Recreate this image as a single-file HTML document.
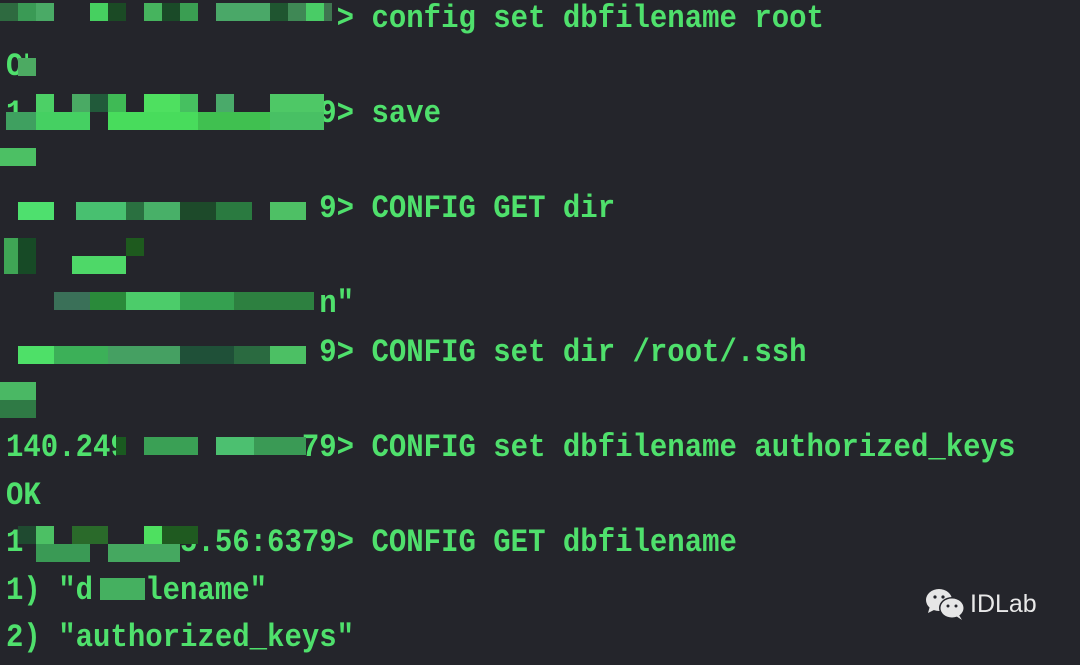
<!DOCTYPE html>
<html><head><meta charset="utf-8"><style>
html,body{margin:0;padding:0}
body{width:1080px;height:653px;background:#24252b;position:relative;overflow:hidden}
.l{position:absolute;left:6px;font-family:"Liberation Mono","DejaVu Sans Mono",monospace;font-size:29px;font-weight:bold;line-height:48px;color:#4fe06c;white-space:pre;transform:scaleY(1.12);transform-origin:left center}
.b{position:absolute}
.wm{position:absolute;left:970px;top:590px;font-family:"Liberation Sans","DejaVu Sans",sans-serif;font-size:25px;color:#e8e8e8}
</style></head><body>
<div class="l" style="top:-5px">                   &gt; config set dbfilename root</div>
<div class="l" style="top:43px">OK</div>
<div class="l" style="top:90px">1                 9&gt; save</div>
<div class="l" style="top:185px">                  9&gt; CONFIG GET dir</div>
<div class="l" style="top:280px">                  n"</div>
<div class="l" style="top:329px">                  9&gt; CONFIG set dir /root/.ssh</div>
<div class="l" style="top:424px">140.249          79&gt; CONFIG set dbfilename authorized_keys</div>
<div class="l" style="top:472px">OK</div>
<div class="l" style="top:519px">1         5.56:6379&gt; CONFIG GET dbfilename</div>
<div class="l" style="top:567px">1) "d   lename"</div>
<div class="l" style="top:614px">2) "authorized_keys"</div>

<div class="b" style="left:0;top:3px;width:18px;height:18px;background:#2e6a40"></div>
<div class="b" style="left:18px;top:3px;width:18px;height:18px;background:#3a9a55"></div>
<div class="b" style="left:36px;top:3px;width:18px;height:18px;background:#4aaa66"></div>
<div class="b" style="left:90px;top:3px;width:18px;height:18px;background:#46d060"></div>
<div class="b" style="left:108px;top:3px;width:18px;height:18px;background:#1b4a25"></div>
<div class="b" style="left:144px;top:3px;width:18px;height:18px;background:#46b45e"></div>
<div class="b" style="left:162px;top:3px;width:18px;height:18px;background:#1a4a28"></div>
<div class="b" style="left:180px;top:3px;width:18px;height:18px;background:#3a9e52"></div>
<div class="b" style="left:216px;top:3px;width:54px;height:18px;background:#4aa868"></div>
<div class="b" style="left:270px;top:3px;width:18px;height:18px;background:#1f5530"></div>
<div class="b" style="left:288px;top:3px;width:18px;height:18px;background:#3f8855"></div>
<div class="b" style="left:306px;top:3px;width:18px;height:18px;background:#49cc66"></div>
<div class="b" style="left:324px;top:3px;width:8px;height:18px;background:#3f7550"></div>
<div class="b" style="left:28px;top:52px;width:16px;height:26px;background:#24252b"></div>
<div class="b" style="left:18px;top:58px;width:18px;height:18px;background:#4caa62"></div>

<div class="b" style="left:36px;top:94px;width:18px;height:18px;background:#4cd066"></div>
<div class="b" style="left:72px;top:94px;width:18px;height:18px;background:#4aaa64"></div>
<div class="b" style="left:90px;top:94px;width:18px;height:18px;background:#215a3a"></div>
<div class="b" style="left:108px;top:94px;width:18px;height:18px;background:#3fba55"></div>
<div class="b" style="left:144px;top:94px;width:36px;height:18px;background:#4ee060"></div>
<div class="b" style="left:180px;top:94px;width:18px;height:18px;background:#46c060"></div>
<div class="b" style="left:216px;top:94px;width:18px;height:18px;background:#4aaa6a"></div>
<div class="b" style="left:270px;top:94px;width:54px;height:18px;background:#4ec866"></div>
<div class="b" style="left:6px;top:112px;width:30px;height:18px;background:#3fa060"></div>
<div class="b" style="left:36px;top:112px;width:54px;height:18px;background:#45d062"></div>
<div class="b" style="left:108px;top:112px;width:90px;height:18px;background:#48dc5c"></div>
<div class="b" style="left:198px;top:112px;width:72px;height:18px;background:#40c050"></div>
<div class="b" style="left:270px;top:112px;width:54px;height:18px;background:#48c064"></div>
<div class="b" style="left:0;top:148px;width:36px;height:18px;background:#4cc064"></div>

<div class="b" style="left:18px;top:202px;width:36px;height:18px;background:#4ee06e"></div>
<div class="b" style="left:76px;top:202px;width:50px;height:18px;background:#48c070"></div>
<div class="b" style="left:126px;top:202px;width:18px;height:18px;background:#2a7040"></div>
<div class="b" style="left:144px;top:202px;width:36px;height:18px;background:#48b068"></div>
<div class="b" style="left:180px;top:202px;width:36px;height:18px;background:#1d4a2a"></div>
<div class="b" style="left:216px;top:202px;width:36px;height:18px;background:#2a7a40"></div>
<div class="b" style="left:270px;top:202px;width:36px;height:18px;background:#4ec065"></div>

<div class="b" style="left:4px;top:238px;width:14px;height:36px;background:#3fa555"></div>
<div class="b" style="left:18px;top:238px;width:18px;height:36px;background:#174a26"></div>
<div class="b" style="left:126px;top:238px;width:18px;height:18px;background:#1e5a1e"></div>
<div class="b" style="left:72px;top:256px;width:54px;height:18px;background:#4ed868"></div>

<div class="b" style="left:54px;top:292px;width:36px;height:18px;background:#3a7058"></div>
<div class="b" style="left:90px;top:292px;width:54px;height:18px;background:#2a8a3a"></div>
<div class="b" style="left:126px;top:292px;width:54px;height:18px;background:#4ccc6a"></div>
<div class="b" style="left:180px;top:292px;width:54px;height:18px;background:#35a050"></div>
<div class="b" style="left:234px;top:292px;width:80px;height:18px;background:#2d8040"></div>

<div class="b" style="left:18px;top:346px;width:36px;height:18px;background:#4ee068"></div>
<div class="b" style="left:54px;top:346px;width:54px;height:18px;background:#3cb058"></div>
<div class="b" style="left:108px;top:346px;width:72px;height:18px;background:#45a062"></div>
<div class="b" style="left:180px;top:346px;width:54px;height:18px;background:#1f5038"></div>
<div class="b" style="left:234px;top:346px;width:36px;height:18px;background:#2a6a40"></div>
<div class="b" style="left:270px;top:346px;width:36px;height:18px;background:#4cc064"></div>
<div class="b" style="left:0;top:382px;width:36px;height:18px;background:#4ab864"></div>
<div class="b" style="left:0;top:400px;width:36px;height:18px;background:#2f7a45"></div>

<div class="b" style="left:116px;top:432px;width:28px;height:28px;background:#24252b"></div>
<div class="b" style="left:116px;top:437px;width:10px;height:18px;background:#1a5a20"></div>
<div class="b" style="left:144px;top:437px;width:54px;height:18px;background:#3aa055"></div>
<div class="b" style="left:216px;top:437px;width:54px;height:18px;background:#4cc070"></div>
<div class="b" style="left:254px;top:437px;width:52px;height:18px;background:#3a9a55"></div>

<div class="b" style="left:18px;top:526px;width:18px;height:18px;background:#1f4a30"></div>
<div class="b" style="left:36px;top:526px;width:18px;height:18px;background:#4cc064"></div>
<div class="b" style="left:72px;top:526px;width:36px;height:18px;background:#2a6a2a"></div>
<div class="b" style="left:144px;top:526px;width:18px;height:18px;background:#4ee060"></div>
<div class="b" style="left:162px;top:526px;width:36px;height:18px;background:#1f5a20"></div>
<div class="b" style="left:36px;top:544px;width:54px;height:18px;background:#3a9a55"></div>
<div class="b" style="left:108px;top:544px;width:72px;height:18px;background:#45a860"></div>

<div class="b" style="left:100px;top:578px;width:45px;height:22px;background:#45b060"></div>

<svg style="position:absolute;left:925px;top:588px" width="42" height="34" viewBox="0 0 42 34">
<ellipse cx="14" cy="12" rx="13" ry="11" fill="#e6e6e6"/>
<path d="M5 18 L3 25 L11 21Z" fill="#e6e6e6"/>
<ellipse cx="27" cy="20" rx="13" ry="11" fill="#24252b"/>
<ellipse cx="27" cy="20" rx="11.5" ry="9.5" fill="#e6e6e6"/>
<path d="M34 27 L37 32 L31 28Z" fill="#e6e6e6"/>
<circle cx="10" cy="9" r="1.6" fill="#24252b"/><circle cx="18" cy="9" r="1.6" fill="#24252b"/>
<circle cx="23" cy="18" r="1.5" fill="#24252b"/><circle cx="31" cy="18" r="1.5" fill="#24252b"/>
</svg>
<div class="wm">IDLab</div>
</body></html>
